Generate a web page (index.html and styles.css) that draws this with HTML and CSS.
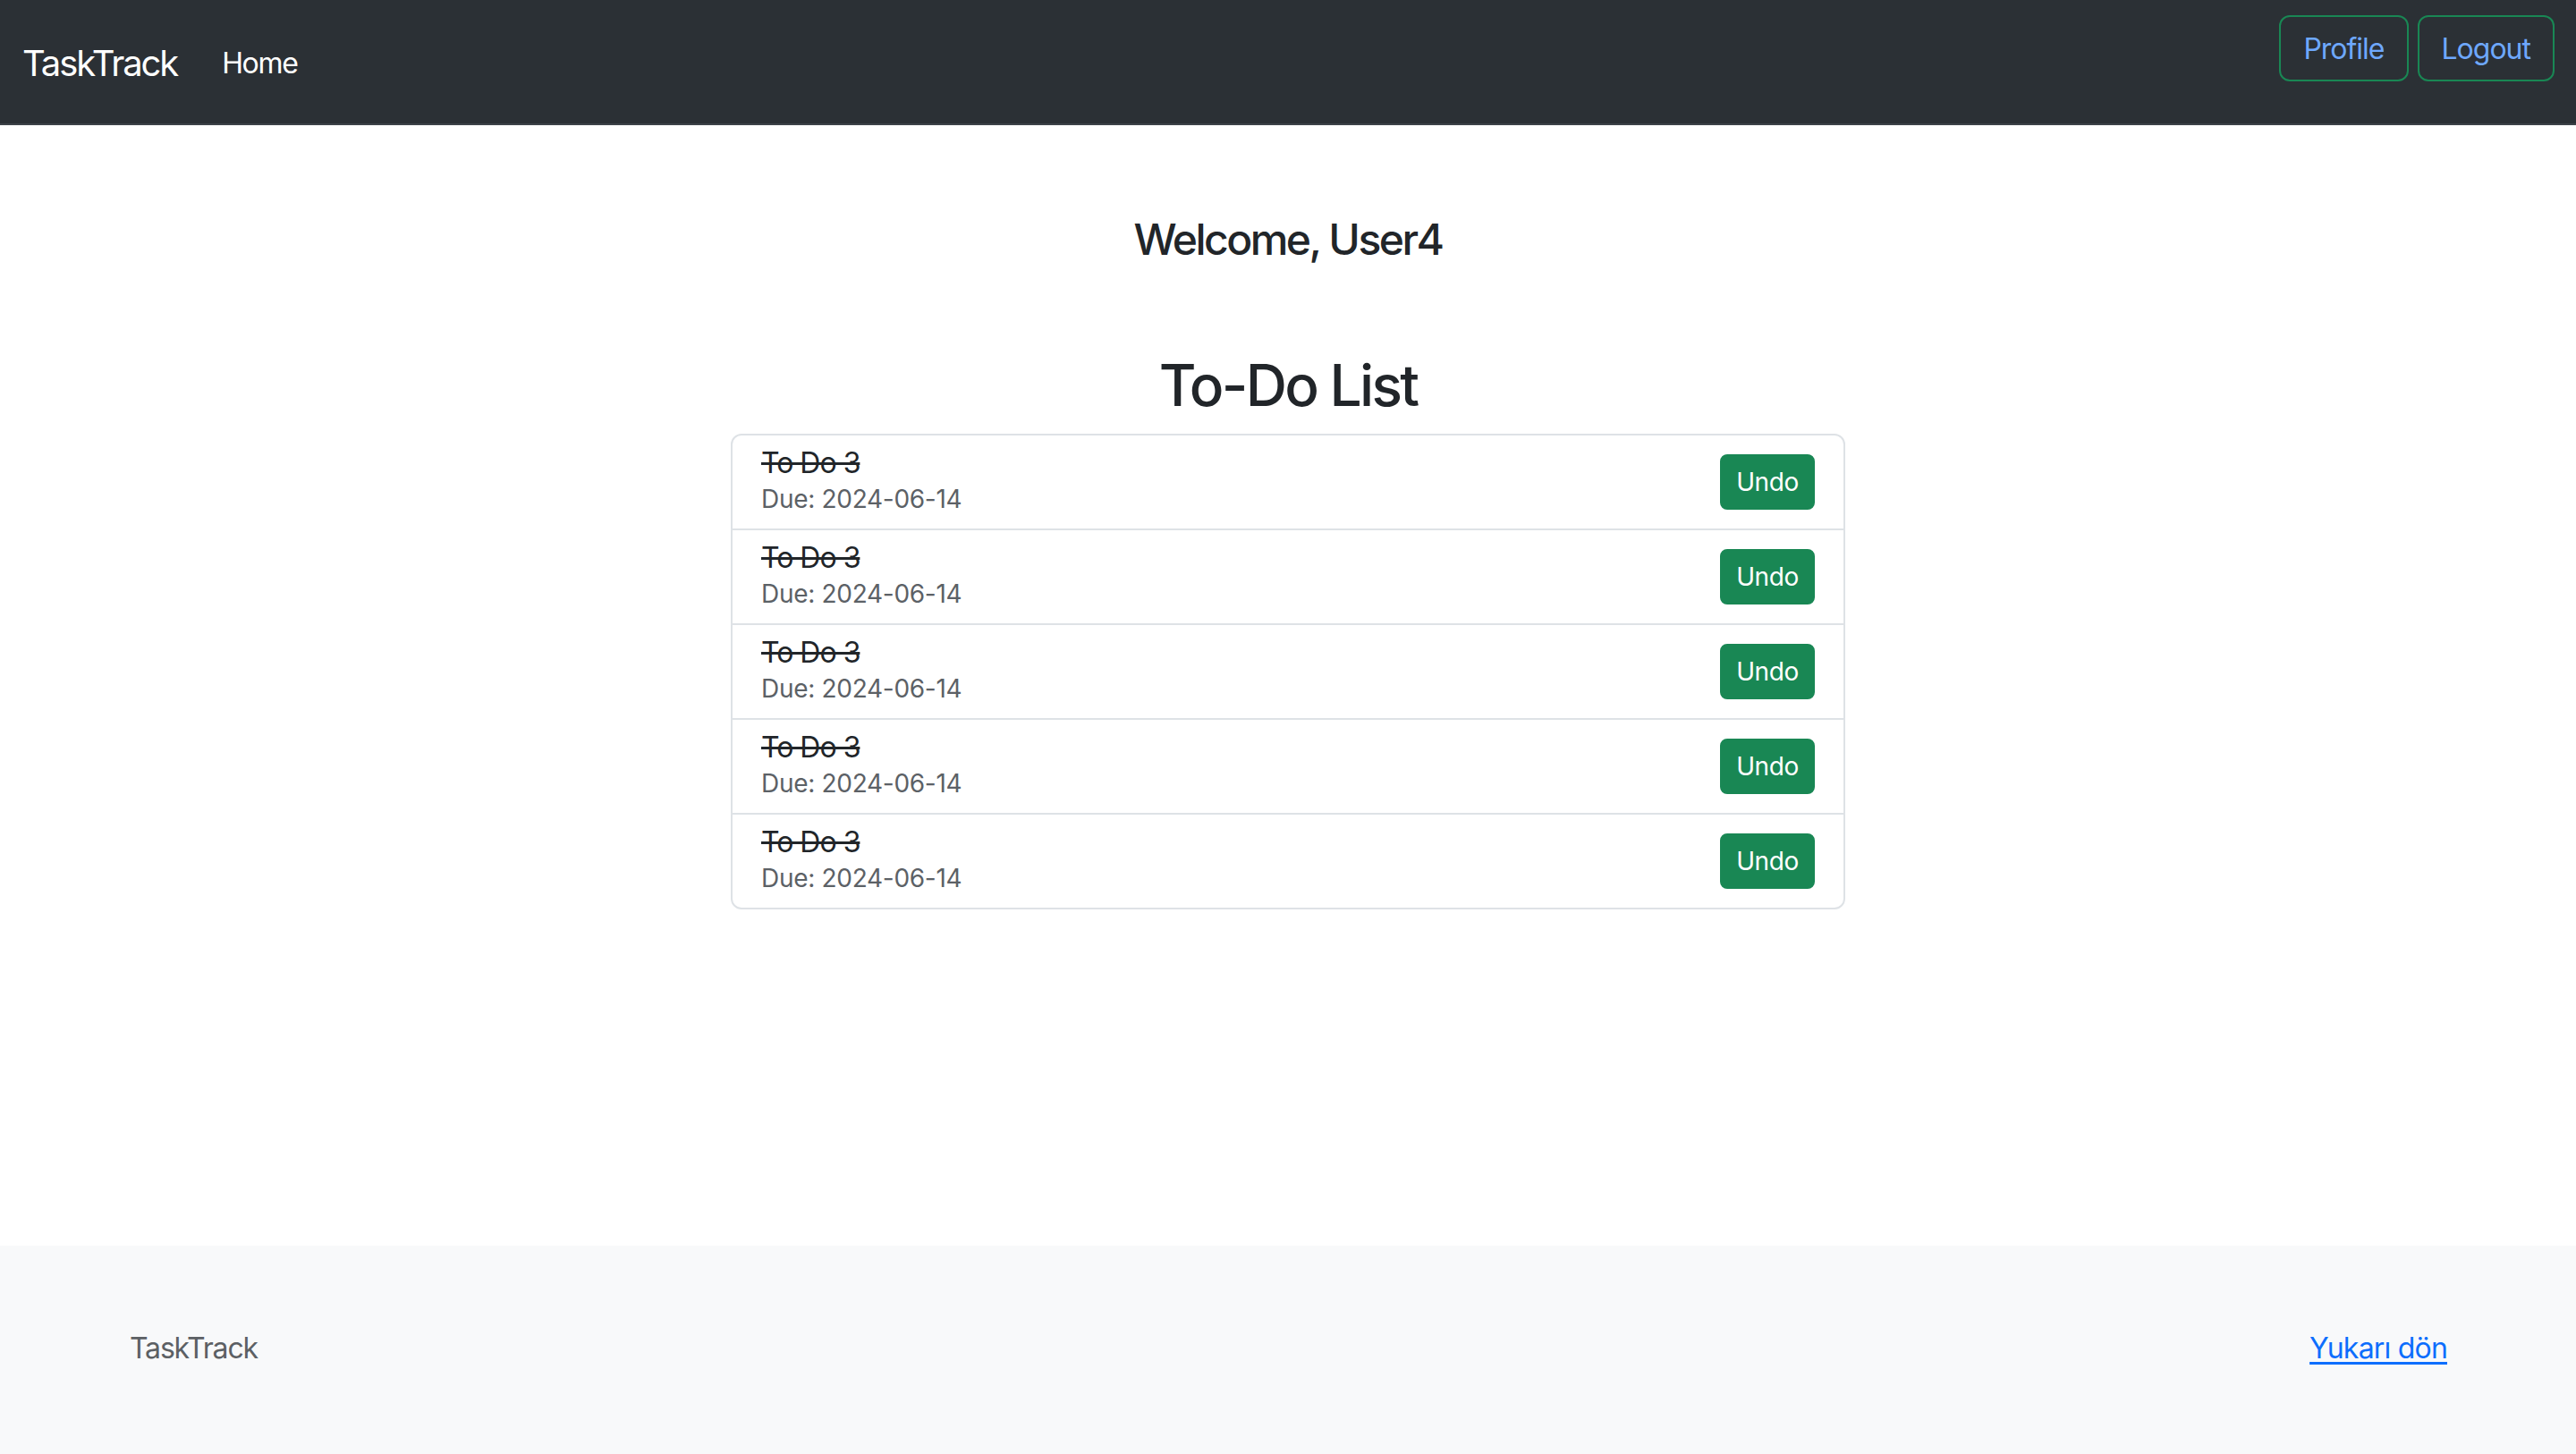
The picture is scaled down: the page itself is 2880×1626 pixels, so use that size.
FILE: index.html
```html
<!DOCTYPE html>
<html lang="tr">
<head>
<meta charset="utf-8">
<title>TaskTrack</title>
<link rel="stylesheet" href="styles.css">
</head>
<body>
<nav class="navbar">
  <div class="nav-left">
    <a class="brand" href="#">TaskTrack</a>
    <a class="nav-link" href="#">Home</a>
  </div>
  <div class="nav-right">
    <a class="btn-outline" href="#">Profile</a>
    <a class="btn-outline" href="#">Logout</a>
  </div>
</nav>
<main class="main">
  <h4 class="welcome">Welcome, User4</h4>
  <h2 class="list-title">To-Do List</h2>
  <ul class="todo-list">
    <li class="todo-item"><div class="todo-text"><span class="todo-title">To Do 3</span><span class="todo-due">Due: 2024-06-14</span></div><button class="btn-undo">Undo</button></li>
    <li class="todo-item"><div class="todo-text"><span class="todo-title">To Do 3</span><span class="todo-due">Due: 2024-06-14</span></div><button class="btn-undo">Undo</button></li>
    <li class="todo-item"><div class="todo-text"><span class="todo-title">To Do 3</span><span class="todo-due">Due: 2024-06-14</span></div><button class="btn-undo">Undo</button></li>
    <li class="todo-item"><div class="todo-text"><span class="todo-title">To Do 3</span><span class="todo-due">Due: 2024-06-14</span></div><button class="btn-undo">Undo</button></li>
    <li class="todo-item"><div class="todo-text"><span class="todo-title">To Do 3</span><span class="todo-due">Due: 2024-06-14</span></div><button class="btn-undo">Undo</button></li>
  </ul>
</main>
<footer class="footer">
  <div class="footer-inner">
    <span class="footer-brand">TaskTrack</span>
    <a class="footer-link" href="#">Yukarı dön</a>
  </div>
</footer>
</body>
</html>
```
FILE: styles.css
```css
* { box-sizing: border-box; }
html, body { margin: 0; padding: 0; }
body {
  font-family: Inter, "Noto Sans", "Liberation Sans", sans-serif;
  color: #212529;
  background: #fff;
  min-height: 100vh;
  display: flex;
  flex-direction: column;
  font-size: 32px;
}
a { text-decoration: none; }

.navbar {
  height: 140px;
  background: #2b3035;
  border-bottom: 2px solid #3d4248;
  display: flex;
  justify-content: space-between;
  align-items: flex-start;
  padding: 0 24px 0 25px;
}
.nav-left {
  display: flex;
  align-items: center;
  height: 138px;
  padding-top: 4px;
}
.brand {
  color: #fff;
  font-size: 40px;
  line-height: 60px;
  margin-right: 34px;
  letter-spacing: -2.1px;
}
.nav-link {
  color: #fff;
  font-size: 32px;
  line-height: 48px;
  padding: 0 16px;
  letter-spacing: -1.3px;
}
.nav-right {
  display: flex;
  gap: 10px;
  margin-top: 17px;
}
.btn-outline {
  display: inline-block;
  border: 2px solid #198754;
  border-radius: 12px;
  color: #6ea8fe;
  font-size: 32px;
  line-height: 44px;
  padding: 14px 25px 12px;
  letter-spacing: -1px;
}

.main {
  flex: 1;
  padding-top: 99px;
  display: flex;
  flex-direction: column;
  align-items: center;
}
.welcome {
  margin: 0;
  font-size: 48px;
  font-weight: 500;
  line-height: 1.2;
  letter-spacing: -2.5px;
}
.list-title {
  margin: 96px 0 16px;
  font-size: 64px;
  font-weight: 500;
  line-height: 1.2;
  letter-spacing: -2.7px;
}
.todo-list {
  list-style: none;
  margin: 0;
  padding: 0;
  width: 1246px;
  border: 2px solid #dee2e6;
  border-radius: 12px;
}
.todo-item {
  display: flex;
  justify-content: space-between;
  align-items: center;
  padding: 14px 32px 14px 32px;
  border-bottom: 2px solid #dee2e6;
}
.todo-item:last-child { border-bottom: none; }
.todo-text {
  display: flex;
  flex-direction: column;
}
.todo-title {
  font-size: 32px;
  line-height: 34px;
  text-decoration: line-through;
  letter-spacing: -1px;
}
.todo-due {
  font-size: 28px;
  line-height: 38px;
  margin-top: 4px;
  color: #5c6166;
  letter-spacing: -0.3px;
}
.btn-undo {
  font-family: inherit;
  background: #198754;
  color: #fff;
  border: 2px solid #198754;
  border-radius: 8px;
  font-size: 28px;
  line-height: 42px;
  padding: 8px 16px;
  width: 106px;
  letter-spacing: -0.4px;
}

.footer {
  background: #f8f9fa;
  height: 233px;
  display: flex;
  align-items: center;
  padding-bottom: 4px;
}
.footer-inner {
  margin: 0 auto;
  padding: 0 144px 0 145px;
  width: 100%;
  display: flex;
  justify-content: space-between;
  align-items: center;
  font-size: 32px;
  line-height: 48px;
}
.footer-brand {
  color: #5c6064;
  letter-spacing: -1.2px;
}
.footer-link {
  color: #0d6efd;
  text-decoration: underline;
  text-decoration-thickness: 3px;
  text-underline-offset: 4px;
  letter-spacing: -0.8px;
}
```
